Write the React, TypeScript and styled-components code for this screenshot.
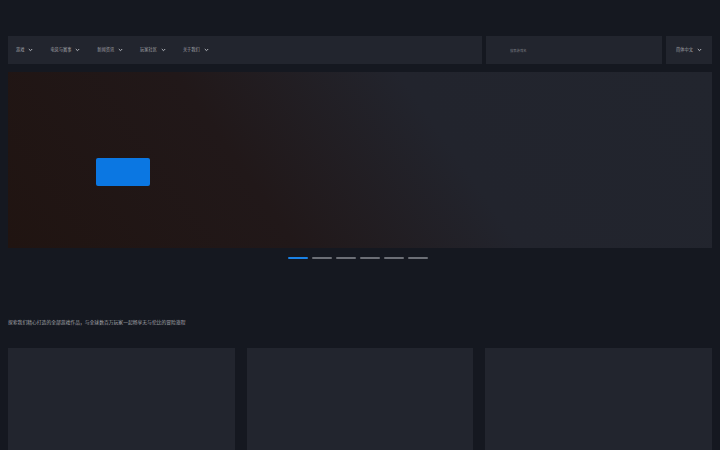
import React, { useState } from 'react';
import styled, { createGlobalStyle } from 'styled-components';

const GlobalStyle = createGlobalStyle`
    html, body {
        margin: 0;
        padding: 0;
        background: #151820;
        font-family: "Noto Sans", "Noto Sans CJK SC", sans-serif;
    }
`;

const Page = styled.div`
    padding: 36px 8px 0 8px;
    box-sizing: border-box;
    width: 720px;
    height: 450px;
    overflow: hidden;
`;

const TopBar = styled.header`
    display: flex;
    gap: 4px;
    height: 28px;
`;

const Nav = styled.nav`
    flex: 1;
    display: flex;
    align-items: center;
    gap: 17px;
    padding: 0 8px;
    background: #22252e;
`;

const NavItem = styled.button`
    display: flex;
    align-items: center;
    gap: 4px;
    padding: 0;
    background: none;
    border: none;
    color: #a2a4aa;
    font-family: inherit;
    font-size: 4.2px;
    line-height: 1;
    cursor: pointer;
`;

const Chevron = () => (
    <svg width="5" height="4" viewBox="0 0 5 4" fill="none">
        <path d="M0.8 1l1.7 1.7L4.2 1" stroke="#b4b6bc" strokeWidth="1" />
    </svg>
);

const Search = styled.input`
    width: 176px;
    box-sizing: border-box;
    padding: 0 0 0 24px;
    background: #22252e;
    border: none;
    outline: none;
    font-family: inherit;
    font-size: 3.3px;
    color: #9a9ca3;

    &::placeholder {
        color: #7a7d84;
    }
`;

const LangButton = styled(NavItem)`
    width: 46px;
    justify-content: center;
    background: #22252e;
`;

const Hero = styled.section`
    margin-top: 8px;
    height: 176px;
    display: flex;
    align-items: center;
    padding: 24px 0 0 88px;
    box-sizing: border-box;
    background: linear-gradient(55deg, #201411 0%, #211819 35%, #22242d 62%, #22252e 100%);
`;

const HeroButton = styled.button`
    width: 54px;
    height: 28px;
    border: none;
    border-radius: 2px;
    background: #0b77e2;
    cursor: pointer;
`;

const Dots = styled.div`
    display: flex;
    justify-content: center;
    gap: 4px;
    margin-top: 9px;
    padding-right: 4px;
`;

const Dot = styled.span<{ $active?: boolean }>`
    width: 20px;
    height: 2px;
    border-radius: 1px;
    background: ${props => props.$active ? '#1a82e6' : '#6c6f76'};
`;

const SectionTitle = styled.h2`
    margin: 57px 0 0 0;
    font-size: 4.8px;
    font-weight: normal;
    color: #a4a6ac;
    line-height: 12px;
`;

const CardGrid = styled.div`
    display: grid;
    grid-template-columns: repeat(3, 1fr);
    gap: 12px;
    margin-top: 20px;
`;

const Card = styled.div`
    height: 140px;
    background: #22252e;
`;

const navItems = ['游戏', '电竞与赛事', '新闻资讯', '玩家社区', '关于我们'];

export default function App() {
    const [active, setActive] = useState(0);

    return (
        <>
            <GlobalStyle />
            <Page lang="zh-CN">
                <TopBar>
                    <Nav>
                        {navItems.map(item => (
                            <NavItem key={item}>{item}<Chevron /></NavItem>
                        ))}
                    </Nav>
                    <Search placeholder="搜索游戏名" />
                    <LangButton>简体中文<Chevron /></LangButton>
                </TopBar>
                <Hero>
                    <HeroButton />
                </Hero>
                <Dots>
                    {[0, 1, 2, 3, 4, 5].map(i => (
                        <Dot key={i} $active={i === active} onClick={() => setActive(i)} />
                    ))}
                </Dots>
                <SectionTitle>探索我们精心打造的全部游戏作品，与全球数百万玩家一起畅享无与伦比的冒险旅程</SectionTitle>
                <CardGrid>
                    <Card />
                    <Card />
                    <Card />
                </CardGrid>
            </Page>
        </>
    );
}
